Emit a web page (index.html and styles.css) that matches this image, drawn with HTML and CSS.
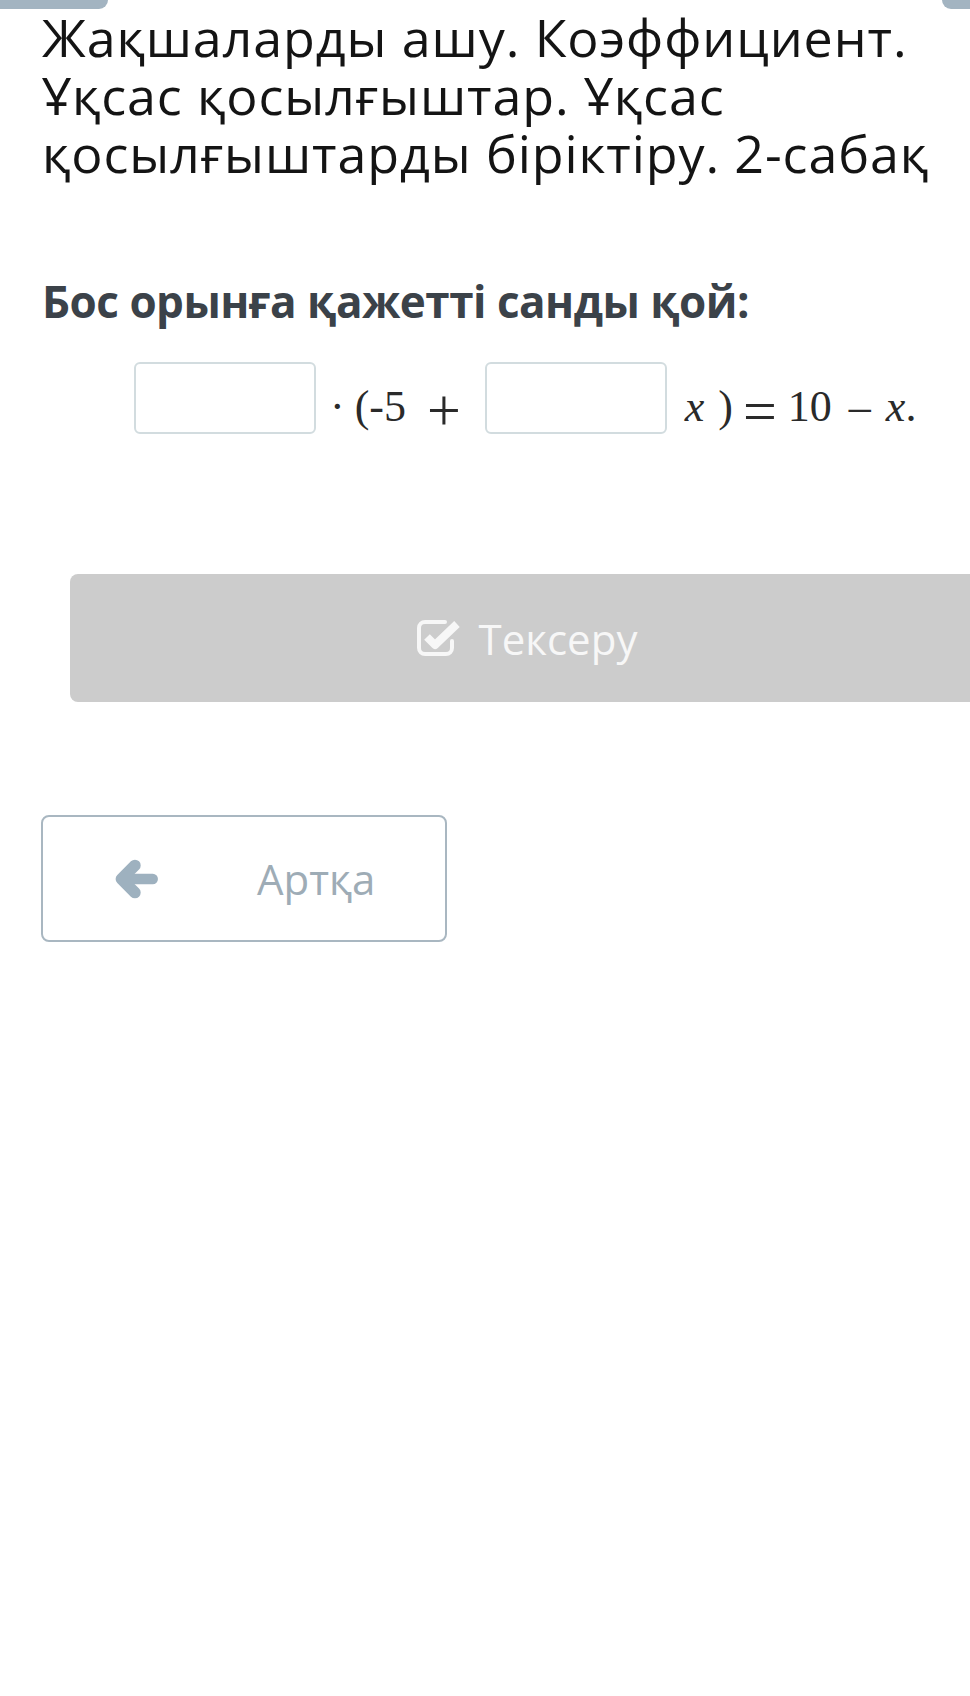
FILE: index.html
```html
<!DOCTYPE html>
<html lang="kk">
<head>
    <meta charset="UTF-8">
    <meta name="viewport" content="width=device-width, initial-scale=1.0">
    <title>Ұқсас қосылғыштар</title>
    <link rel="stylesheet" href="styles.css">
</head>
<body>
    <div class="top-tabs">
        <span class="tab tab-left"></span>
        <span class="tab tab-right"></span>
    </div>

    <main class="lesson">
        <h1 class="lesson-title">Жақшаларды ашу. Коэффициент.<br>Ұқсас қосылғыштар. Ұқсас<br>қосылғыштарды біріктіру. 2-сабақ</h1>

        <h2 class="task">Бос орынға қажетті санды қой:</h2>

        <div class="equation">
            <input class="blank" type="text" aria-label="Бірінші сан">
            <span class="math math-mid"><span class="cdot">·</span><span class="paren-open">(</span><span>-5</span><span class="op op-plus">+</span></span>
            <input class="blank blank-second" type="text" aria-label="Екінші сан">
            <span class="math math-end"><i class="var">x</i><span class="paren-close">)</span><span class="op op-eq">=</span><span class="num">10</span><span class="minus">–</span><span class="tail"><i>x</i>.</span></span>
        </div>

        <button class="check-btn" disabled>
            <svg class="check-icon" viewBox="0 0 46 40" width="46" height="40">
                <path d="M29 4 H9 a6 6 0 0 0 -6 6 V30 a6 6 0 0 0 6 6 H30 a6 6 0 0 0 6 -6 V23" fill="none" stroke="currentColor" stroke-width="4" stroke-linecap="round"/>
                <polyline points="11,19 19,27 41,6" fill="none" stroke="currentColor" stroke-width="8" stroke-linejoin="round"/>
            </svg>
            <span>Тексеру</span>
        </button>

        <button class="back-btn">
            <svg class="arrow-icon" viewBox="0 0 44 38" width="46" height="40">
                <line x1="9" y1="19" x2="38" y2="19" stroke="currentColor" stroke-width="10" stroke-linecap="round"/>
                <polyline points="21,6 8,19 21,32" fill="none" stroke="currentColor" stroke-width="11" stroke-linecap="round" stroke-linejoin="round"/>
            </svg>
            <span>Артқа</span>
        </button>
    </main>
</body>
</html>
```

FILE: styles.css
```css
html, body {
    overflow-x: hidden;
}

body {
    margin: 0;
    padding: 0;
    background-color: #fff;
    font-family: "Open Sans", "Noto Sans", sans-serif;
    color: #1a1a1a;
}

.top-tabs {
    display: flex;
    justify-content: space-between;
    height: 9px;
}

.tab {
    display: block;
    background-color: #a3b4c1;
}

.tab-left {
    width: 108px;
    border-radius: 0 0 10px 0;
}

.tab-right {
    width: 28px;
    border-radius: 0 0 0 10px;
}

.lesson {
    padding: 0 0 0 42px;
}

.lesson-title {
    margin: -1px 0 0;
    font-size: 52px;
    font-weight: 400;
    letter-spacing: 0.9px;
    line-height: 58px;
    white-space: nowrap;
    color: #141414;
}

.task {
    margin: 88px 0 0;
    font-size: 44px;
    font-weight: 700;
    letter-spacing: -0.5px;
    line-height: 62px;
    color: #3b4249;
}

/* equation row: blanks + math text */
.equation {
    display: flex;
    align-items: flex-end;
    margin: 30px 0 0 92px;
}

.blank {
    box-sizing: border-box;
    width: 182px;
    height: 72px;
    border: 2px solid #d2dcdf;
    border-radius: 6px;
    background: #fff;
    padding: 0;
}

.blank-second {
    margin-left: 24px;
}

.math {
    display: block;
    font-family: "Liberation Serif", "DejaVu Serif", serif;
    font-size: 44px;
    line-height: 44px;
    margin-bottom: 5px;
    color: #2a2a2a;
    white-space: nowrap;
}

.math > * {
    display: inline-block;
}

.math .op {
    font-size: 60px;
    line-height: 0;
}

.op-plus {
    vertical-align: -9px;
}

.op-eq {
    vertical-align: -10px;
}

.cdot {
    margin-left: 14px;
}

.paren-open {
    margin-left: 10px;
}

.op-plus {
    margin-left: 21px;
}

.var {
    margin-left: 18px;
}

.paren-close {
    margin-left: 14px;
}

.op-eq {
    margin-left: 10px;
}

.num {
    margin-left: 11px;
}

.minus {
    margin-left: 17px;
}

.tail {
    margin-left: 15px;
}

.check-btn {
    display: flex;
    align-items: center;
    justify-content: center;
    gap: 17px;
    box-sizing: border-box;
    width: 913px;
    height: 128px;
    margin: 140px 0 0 28px;
    border: none;
    border-radius: 8px;
    background-color: #cccccc;
    color: #f7f7f7;
    font-family: inherit;
    font-size: 42px;
    padding: 0;
}

.check-icon {
    display: block;
}

.back-btn {
    display: flex;
    align-items: center;
    box-sizing: border-box;
    width: 406px;
    height: 127px;
    margin: 113px 0 0 -1px;
    padding: 0 0 0 70px;
    border: 2px solid #a9b7c1;
    border-radius: 8px;
    background-color: #fff;
    color: #9eb1bf;
    font-family: inherit;
    font-size: 42px;
}

.arrow-icon {
    display: block;
}

.back-btn span {
    margin-left: 98px;
    color: #9eacb6;
}
```
